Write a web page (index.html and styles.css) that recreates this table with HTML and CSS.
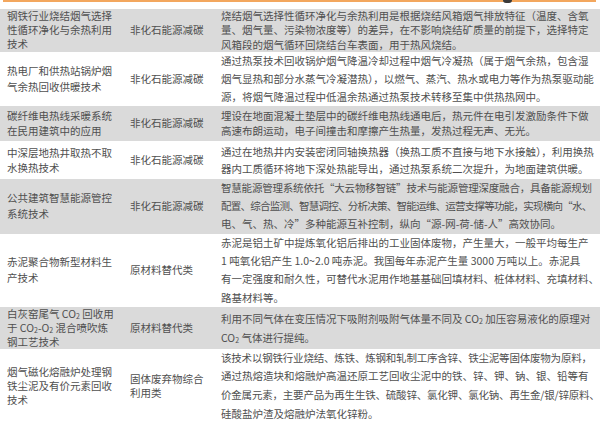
FILE: index.html
```html
<!DOCTYPE html>
<html lang="zh-CN">
<head>
<meta charset="utf-8">
<title>技术目录</title>
<link rel="stylesheet" href="styles.css">
</head>
<body>
<div class="page">
  <div class="topbar"><span class="dot"></span></div>
  <div class="table">
    <div class="row grey r1">
      <div class="cell c1"><div class="txt">钢铁行业烧结烟气选择<br>性循环净化与余热利用<br>技术</div></div>
      <div class="cell c2"><div class="txt">非化石能源减碳</div></div>
      <div class="cell c3"><div class="txt">烧结烟气选择性循环净化与余热利用是根据烧结风箱烟气排放特征（温度、含氧<br>量、烟气量、污染物浓度等）的差异，在不影响烧结矿质量的前提下，选择特定<br>风箱段的烟气循环回烧结台车表面，用于热风烧结。</div></div>
    </div>
    <div class="row white r2">
      <div class="cell c1"><div class="txt">热电厂和供热站锅炉烟<br>气余热回收供暖技术</div></div>
      <div class="cell c2"><div class="txt">非化石能源减碳</div></div>
      <div class="cell c3"><div class="txt">通过热泵技术回收锅炉烟气降温冷却过程中烟气冷凝热（属于烟气余热，包含湿<br>烟气显热和部分水蒸气冷凝潜热），以燃气、蒸汽、热水或电力等作为热泵驱动能<br>源，将烟气降温过程中低温余热通过热泵技术转移至集中供热热网中。</div></div>
    </div>
    <div class="row grey r3">
      <div class="cell c1"><div class="txt">碳纤维电热线采暖系统<br>在民用建筑中的应用</div></div>
      <div class="cell c2"><div class="txt">非化石能源减碳</div></div>
      <div class="cell c3"><div class="txt">埋设在地面混凝土垫层中的碳纤维电热线通电后，热元件在电引发激励条件下做<br>高速布朗运动，电子间撞击和摩擦产生热量，发热过程无声、无光。</div></div>
    </div>
    <div class="row white r4">
      <div class="cell c1"><div class="txt">中深层地热井取热不取<br>水换热技术</div></div>
      <div class="cell c2"><div class="txt">非化石能源减碳</div></div>
      <div class="cell c3"><div class="txt">通过在地热井内安装密闭同轴换热器（换热工质不直接与地下水接触），利用换热<br>器内工质循环将地下深处热能导出，通过热泵系统二次提升，为地面建筑供暖。</div></div>
    </div>
    <div class="row grey r5">
      <div class="cell c1"><div class="txt">公共建筑智慧能源管控<br>系统技术</div></div>
      <div class="cell c2"><div class="txt">非化石能源减碳</div></div>
      <div class="cell c3"><div class="txt"><span class="tight">智慧能源管理系统依托“大云物移智链”技术与能源管理深度融合，具备能源规划</span><br><span class="tighter">配置、综合监测、智慧调控、分析决策、智能运维、运营支撑等功能，实现横向“水、</span><br>电、气、热、冷”多种能源互补控制，纵向“源-网-荷-储-人”高效协同。</div></div>
    </div>
    <div class="row white r6">
      <div class="cell c1"><div class="txt">赤泥聚合物新型材料生<br>产技术</div></div>
      <div class="cell c2"><div class="txt">原材料替代类</div></div>
      <div class="cell c3"><div class="txt">赤泥是铝土矿中提炼氧化铝后排出的工业固体废物，产生量大，一般平均每生产<br>1 吨氧化铝产生 1.0~2.0 吨赤泥。我国每年赤泥产生量 3000 万吨以上。赤泥具<br>有一定强度和耐久性，可替代水泥用作地基基础回填材料、桩体材料、充填材料、<br>路基材料等。</div></div>
    </div>
    <div class="row grey r7">
      <div class="cell c1"><div class="txt">白灰窑尾气 CO<sub>2</sub> 回收用<br>于 CO<sub>2</sub>-O<sub>2</sub> 混合喷吹炼<br>钢工艺技术</div></div>
      <div class="cell c2"><div class="txt">原材料替代类</div></div>
      <div class="cell c3"><div class="txt">利用不同气体在变压情况下吸附剂吸附气体量不同及 CO<sub>2</sub> 加压容易液化的原理对<br>CO<sub>2</sub> 气体进行提纯。</div></div>
    </div>
    <div class="row white r8">
      <div class="cell c1"><div class="txt">烟气磁化熔融炉处理钢<br>铁尘泥及有价元素回收<br>技术</div></div>
      <div class="cell c2"><div class="txt">固体废弃物综合<br>利用类</div></div>
      <div class="cell c3"><div class="txt"><span class="tight">该技术以钢铁行业烧结、炼铁、炼钢和轧制工序含锌、铁尘泥等固体废物为原料，</span><br>通过热熔造块和熔融炉高温还原工艺回收尘泥中的铁、锌、钾、钠、银、铅等有<br><span class="tight">价金属元素，主要产品为再生生铁、硫酸锌、氯化钾、氯化钠、再生金/银/锌原料、</span><br>硅酸盐炉渣及熔融炉法氧化锌粉。</div></div>
    </div>
  </div>
</div>
</body>
</html>
```

FILE: styles.css
```css
html, body {
  margin: 0;
  padding: 0;
  background: #ffffff;
}
body {
  width: 600px;
  height: 424px;
  overflow: hidden;
  font-family: "Noto Sans CJK SC", "Noto Sans", sans-serif;
  font-size: 10.5px;
  color: #4f4f4f;
}
.page {
  display: flex;
  flex-direction: column;
}
.topbar {
  position: relative;
  height: 2px;
  margin: 0 4px 7px 3px;
  background: #f3a75e;
}
.dot {
  position: absolute;
  left: 500px;
  top: 0;
  width: 9px;
  height: 3px;
  border-radius: 0 0 5px 5px;
  background: #3a3a3a;
}
.table {
  display: flex;
  flex-direction: column;
}
.row {
  display: grid;
  grid-template-columns: 123px 91px 1fr;
}
.grey { background: #dadada; }
.white { background: #ffffff; }
.cell {
  display: flex;
  align-items: center;
  white-space: nowrap;
  padding-left: 7px;
}
.c1, .c2 { line-height: 14px; }
.tight { letter-spacing: -0.2px; }
.tighter { letter-spacing: -0.75px; }
sub {
  font-size: 7px;
  vertical-align: -1px;
  line-height: 0;
}
.r1 .c3 { line-height: 14.3px; }
.r2 .c3 { line-height: 18px; }
.r2 .c1 { line-height: 15.5px; }
.r3 .c3 { line-height: 15px; padding-top: 2.5px; padding-bottom: 2.5px; }
.r3 .c1 { line-height: 15px; }
.r4 .c3 { line-height: 17px; padding-top: 2px; padding-bottom: 2px; }
.r4 .c1 { line-height: 15px; }
.r5 .c3 { line-height: 18.3px; }
.r5 .c1 { line-height: 16px; }
.r6 .c3 { line-height: 18.25px; }
.r6 .c1 { line-height: 16px; }
.r7 .c3 { line-height: 19px; padding-top: 2px; padding-bottom: 2px; }
.r7 .c1 { line-height: 14px; }
.r8 .c3 { line-height: 18.7px; }
.r8 .c1 { line-height: 14px; }
```
